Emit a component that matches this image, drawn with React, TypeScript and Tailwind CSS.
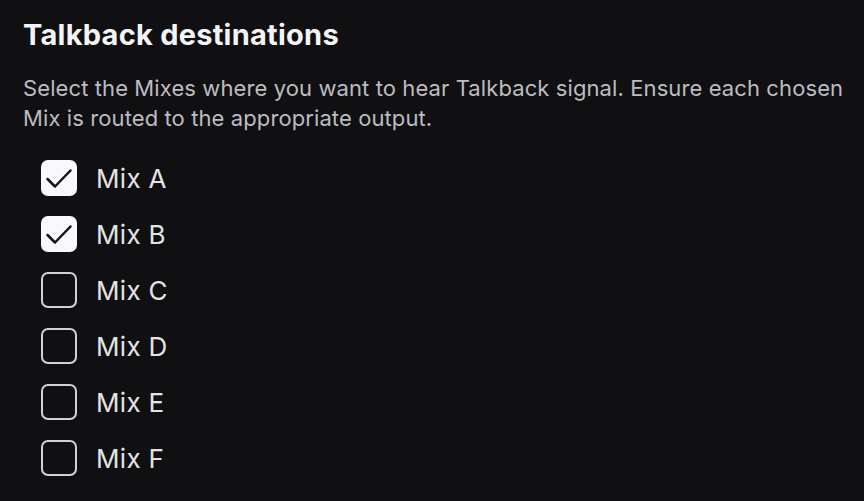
import React, { useState } from "react";

const mixes = ["A", "B", "C", "D", "E", "F"];

export default function App() {
  const [checked, setChecked] = useState<Record<string, boolean>>({ A: true, B: true });
  return (
    <div
      className="w-[864px] h-[501px] bg-[#101012] text-white pl-[23px] pt-[16px] overflow-hidden"
      style={{ fontFamily: "Inter, 'Noto Sans', sans-serif" }}
    >
      <h1 className="text-[29px] font-bold leading-[38px] text-[#f4f4f6] tracking-[0.25px]">Talkback destinations</h1>
      <p className="mt-[19px] text-[22px] leading-[30px] text-[#bcbcc1] w-[830px] tracking-[0.1px]">
        Select the Mixes where you want to hear Talkback signal. Ensure each chosen Mix is routed to the appropriate output.
      </p>
      <div className="mt-[27px] flex flex-col gap-[20px] pl-[18px]">
        {mixes.map((m) => {
          const on = !!checked[m];
          return (
            <label key={m} className="flex items-center gap-[19px] cursor-pointer h-[36px]">
              <button
                type="button"
                onClick={() => setChecked({ ...checked, [m]: !on })}
                className={
                  on
                    ? "relative w-[36px] h-[36px] rounded-[7px] bg-[#f9f9fb] shrink-0"
                    : "relative w-[36px] h-[36px] rounded-[7px] border-[2px] border-[#d2d2d4] shrink-0"
                }
              >
                {on && (
                  <svg className="absolute inset-0" width="36" height="36" viewBox="0 0 36 36" fill="none">
                    <path d="M6.5 19 L14 26.5 L29.5 10.5" stroke="#141416" strokeWidth="2.5" strokeLinecap="round" strokeLinejoin="round" />
                  </svg>
                )}
              </button>
              <span className="text-[26px] leading-[36px] text-[#e4e4e6] tracking-[0.3px] pt-[2px]">Mix {m}</span>
            </label>
          );
        })}
      </div>
    </div>
  );
}
